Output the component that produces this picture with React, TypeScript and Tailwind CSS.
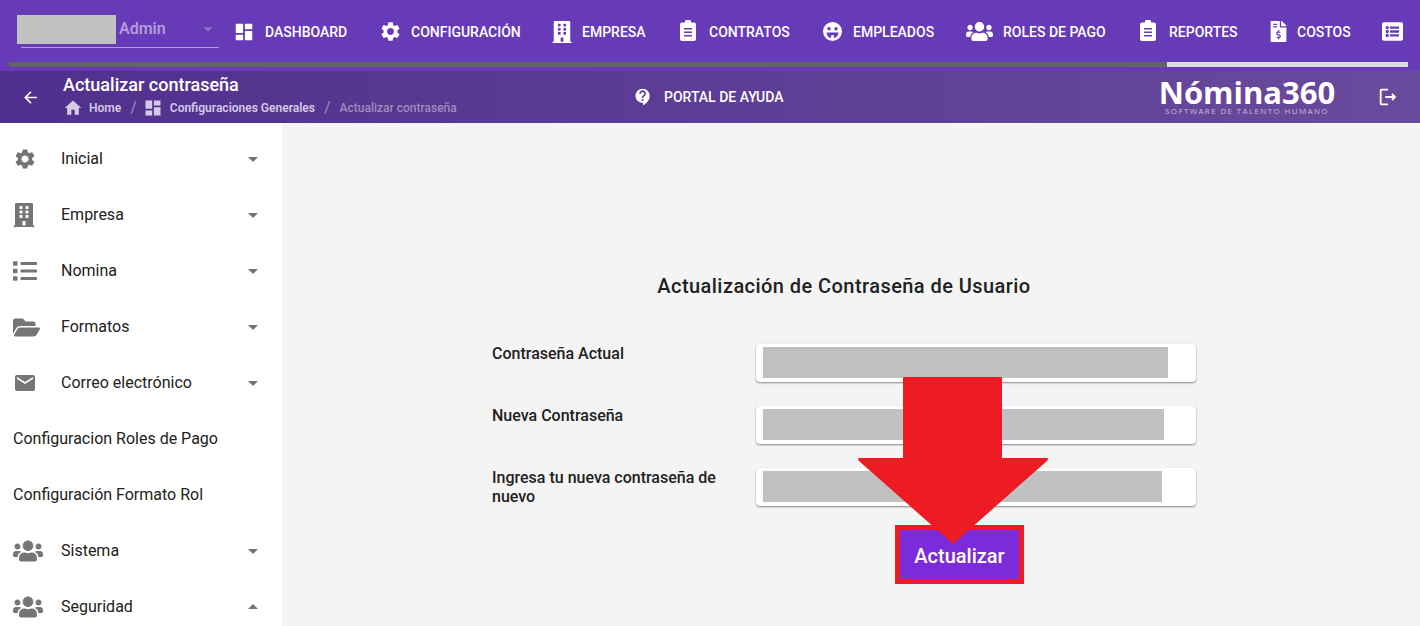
import {
  MdArrowBack,
  MdArrowDropDown,
  MdArrowDropUp,
  MdContactSupport,
  MdDashboard,
  MdEmail,
  MdHome,
  MdOutlineLogout,
  MdSettings,
} from "react-icons/md";
import { FaBuilding, FaFileInvoiceDollar, FaFolderOpen, FaList, FaListAlt, FaUsers } from "react-icons/fa";
import type { ComponentType } from "react";

type Icon = ComponentType<{ className?: string }>;

function ClipboardIcon({ className }: { className?: string }) {
  return (
    <svg className={className} width="16" height="21" viewBox="0 0 16 21" fill="currentColor">
      <path
        fillRule="evenodd"
        d="M2 2.5h3V2a3 3 0 0 1 6 0v.5h3a2 2 0 0 1 2 2V19a2 2 0 0 1-2 2H2a2 2 0 0 1-2-2V4.500a2 2 0 0 1 2-2ZM4 8v1.500h8V8H4Zm0 3.500V13h8v-1.500H4Zm0 3.500v1.500h8V15H4Z"
      />
    </svg>
  );
}

function FaceIcon({ className }: { className?: string }) {
  return (
    <svg className={className} width="19" height="19" viewBox="0 0 19 19" fill="currentColor">
      <path
        fillRule="evenodd"
        d="M9.500 0a9.500 9.500 0 1 1 0 19 9.500 9.500 0 0 1 0-19ZM6 5a1.700 1.700 0 1 0 0 3.400A1.700 1.700 0 0 0 6 5Zm7 0a1.700 1.700 0 1 0 0 3.400A1.700 1.700 0 0 0 13 5ZM3.500 10.500c.2 2.600 1.700 4.800 4.200 5.700l.8-3.200h2l.8 3.200c2.500-.9 4-3.100 4.200-5.700H3.500Z"
      />
    </svg>
  );
}

const topItems: { label: string; icon: Icon; size: string; gap: string; width: string }[] = [
  { label: "DASHBOARD", icon: MdDashboard, size: "text-[22px]", gap: "gap-[10px]", width: "w-[146px]" },
  { label: "CONFIGURACIÓN", icon: MdSettings, size: "text-[23px]", gap: "gap-[10px]", width: "w-[172px]" },
  { label: "EMPRESA", icon: FaBuilding, size: "text-[22px]", gap: "gap-[9px]", width: "w-[126px]" },
  { label: "CONTRATOS", icon: ClipboardIcon, size: "-mt-[2px]", gap: "gap-[10px]", width: "w-[144px]" },
  { label: "EMPLEADOS", icon: FaceIcon, size: "", gap: "gap-[10px]", width: "w-[147px]" },
  { label: "ROLES DE PAGO", icon: FaUsers, size: "text-[27px]", gap: "gap-[13px]", width: "w-[169px]" },
  { label: "REPORTES", icon: ClipboardIcon, size: "-mt-[2px]", gap: "gap-[10px]", width: "w-[130px]" },
  { label: "COSTOS", icon: FaFileInvoiceDollar, size: "text-[21px]", gap: "gap-[8px]", width: "w-[115px]" },
];

const sideItems: { label: string; icon?: Icon; size?: string; open?: boolean; caret?: boolean }[] = [
  { label: "Inicial", icon: MdSettings, size: "text-[24px]", caret: true },
  { label: "Empresa", icon: FaBuilding, size: "text-[24px] -ml-[1.5px]", caret: true },
  { label: "Nomina", icon: FaList, size: "text-[24px]", caret: true },
  { label: "Formatos", icon: FaFolderOpen, size: "text-[27px]", caret: true },
  { label: "Correo electrónico", icon: MdEmail, size: "text-[24px]", caret: true },
  { label: "Configuracion Roles de Pago" },
  { label: "Configuración Formato Rol" },
  { label: "Sistema", icon: FaUsers, size: "text-[30px]", caret: true },
  { label: "Seguridad", icon: FaUsers, size: "text-[30px]", caret: true, open: true },
];

const fields = [
  { label: "Contraseña Actual", fill: "w-[405px]" },
  { label: "Nueva Contraseña", fill: "w-[401px]" },
  { label: "Ingresa tu nueva contraseña de nuevo", fill: "w-[399px]" },
];

export default function App() {
  return (
    <div className="relative flex h-screen flex-col overflow-hidden bg-[#f4f4f4] font-['Roboto',sans-serif]">
      {/* Top nav */}
      <header className="h-[71px] shrink-0 bg-[#673ab7]">
        <div className="flex h-[62px]">
          <div className="ml-[17px] mt-[15px] h-[33px] w-[202px] shrink-0">
            <div className="flex h-[29px] items-start">
              <div className="h-[29px] w-[99px] bg-[#c1c1c1]" />
              <span className="ml-[3px] text-[16px] font-semibold leading-[27px] text-[#b39ddb]">Admin</span>
              <MdArrowDropDown className="ml-auto mt-[3px] text-[22px] text-[#8e72c8]" />
            </div>
            <div className="ml-[4px] mt-[3px] h-px bg-[#b39ddb]" />
          </div>
          <nav className="ml-[14px] flex h-[62px] items-center pt-[1px]">
            {topItems.map(({ label, icon: Icon, size, gap, width }) => (
              <div key={label} className={`flex shrink-0 items-center ${gap} ${width}`}>
                <span className="flex w-[22px] shrink-0 justify-center">
                  <Icon className={`${size} shrink-0 text-white`} />
                </span>
                <span className="pt-[2px] text-[14px] font-medium text-white">{label}</span>
              </div>
            ))}
            <FaListAlt className="shrink-0 text-[21px] text-white" />
          </nav>
        </div>
        <div className="ml-[9px] flex h-[5px] w-[1399px]">
          <div className="w-[1158px] bg-[#646464]" />
          <div className="flex-1 bg-[#dcdcdc]" />
        </div>
      </header>

      {/* Breadcrumb bar */}
      <div className="flex h-[52px] shrink-0 items-center bg-gradient-to-r from-[#512f8e] to-[#6a4a9c]">
        <MdArrowBack className="ml-[21px] shrink-0 text-[19px] text-white" />
        <div className="ml-[23px] w-[570px] shrink-0 pb-[2px]">
          <div className="mb-[2px] text-[18px] font-medium leading-[22px] text-white">Actualizar contraseña</div>
          <div className="flex items-center text-[12px] font-semibold leading-[18px] text-[#d6cbe6]">
            <MdHome className="mr-[6px] shrink-0 text-[20px]" />
            <span>Home</span>
            <span className="ml-[9px] mr-[6px] text-[16px] font-normal text-[#a08cbd]">/</span>
            <MdDashboard className="mr-[7px] shrink-0 text-[20px]" />
            <span>Configuraciones Generales</span>
            <span className="mx-[9px] text-[16px] font-normal text-[#a08cbd]">/</span>
            <span className="font-medium text-[#a08cbd]">Actualizar contraseña</span>
          </div>
        </div>
        <MdContactSupport className="shrink-0 text-[20px] text-white" />
        <span className="ml-[11px] w-[494px] shrink-0 text-[14px] font-medium text-white">PORTAL DE AYUDA</span>
        <div className="flex w-[178px] shrink-0 flex-col items-center">
          <span className="font-['Open_Sans',sans-serif] text-[31px] font-bold leading-[24px] text-white">Nómina360</span>
          <span className="mt-[2px] font-['Open_Sans',sans-serif] text-[8px] leading-[9px] tracking-[0.17em] text-[#c9bcdc]">SOFTWARE DE TALENTO HUMANO</span>
        </div>
        <MdOutlineLogout className="ml-[41px] shrink-0 text-[22px] text-white" />
      </div>

      <div className="flex min-h-0 flex-1">
        {/* Sidebar */}
        <aside className="w-[282px] shrink-0 overflow-hidden bg-white pl-[13px] pr-[17px] pt-[8px]">
          {sideItems.map(({ label, icon: Icon, size, open, caret }) => (
            <div key={label} className="flex h-[56px] items-center text-[16px] text-[#212121]">
              {Icon && (
                <span className="flex w-[48px] shrink-0">
                  <Icon className={`${size} shrink-0 text-[#757575]`} />
                </span>
              )}
              <span>{label}</span>
              {caret &&
                (open ? (
                  <MdArrowDropUp className="ml-auto shrink-0 text-[24px] text-[#757575]" />
                ) : (
                  <MdArrowDropDown className="ml-auto shrink-0 text-[24px] text-[#757575]" />
                ))}
            </div>
          ))}
        </aside>

        {/* Form */}
        <main className="flex-1 pl-[210px] pt-[151px]">
          <h1 className="w-[704px] text-center text-[20px] font-medium leading-[24px] tracking-[0.44px] text-[#212121]">
            Actualización de Contraseña de Usuario
          </h1>
          <div className="mt-[46px] flex flex-col gap-[24px]">
            {fields.map(({ label, fill }) => (
              <div key={label} className="flex h-[38px]">
                <label className="w-[264px] shrink-0 pr-[30px] text-[16px] font-medium leading-[19px] text-[#212121]">
                  {label}
                </label>
                <div className="h-[38px] w-[440px] rounded bg-white pl-[7px] pt-[3px] shadow-[0_1px_2px_rgba(0,0,0,0.45)]">
                  <div className={`h-[31px] bg-[#c1c1c1] ${fill}`} />
                </div>
              </div>
            ))}
          </div>
          <button className="ml-[403px] mt-[19px] flex h-[59px] w-[129px] items-center justify-center border-[5px] border-[#ed1c24] bg-[#7b2bd9] pt-[2px] text-[20px] font-medium text-white">
            Actualizar
          </button>
        </main>
      </div>

      {/* Annotation arrow */}
      <svg className="absolute left-[857px] top-[377px]" width="192" height="168" viewBox="0 0 192 168">
        <path d="M46 1 Q46 0 47 0 H144 Q145 0 145 1 V81 H190 Q192 81 190 84 L96 167 L2 84 Q0 81 2 81 H46 Z" fill="#ed1c24" />
      </svg>
    </div>
  );
}
